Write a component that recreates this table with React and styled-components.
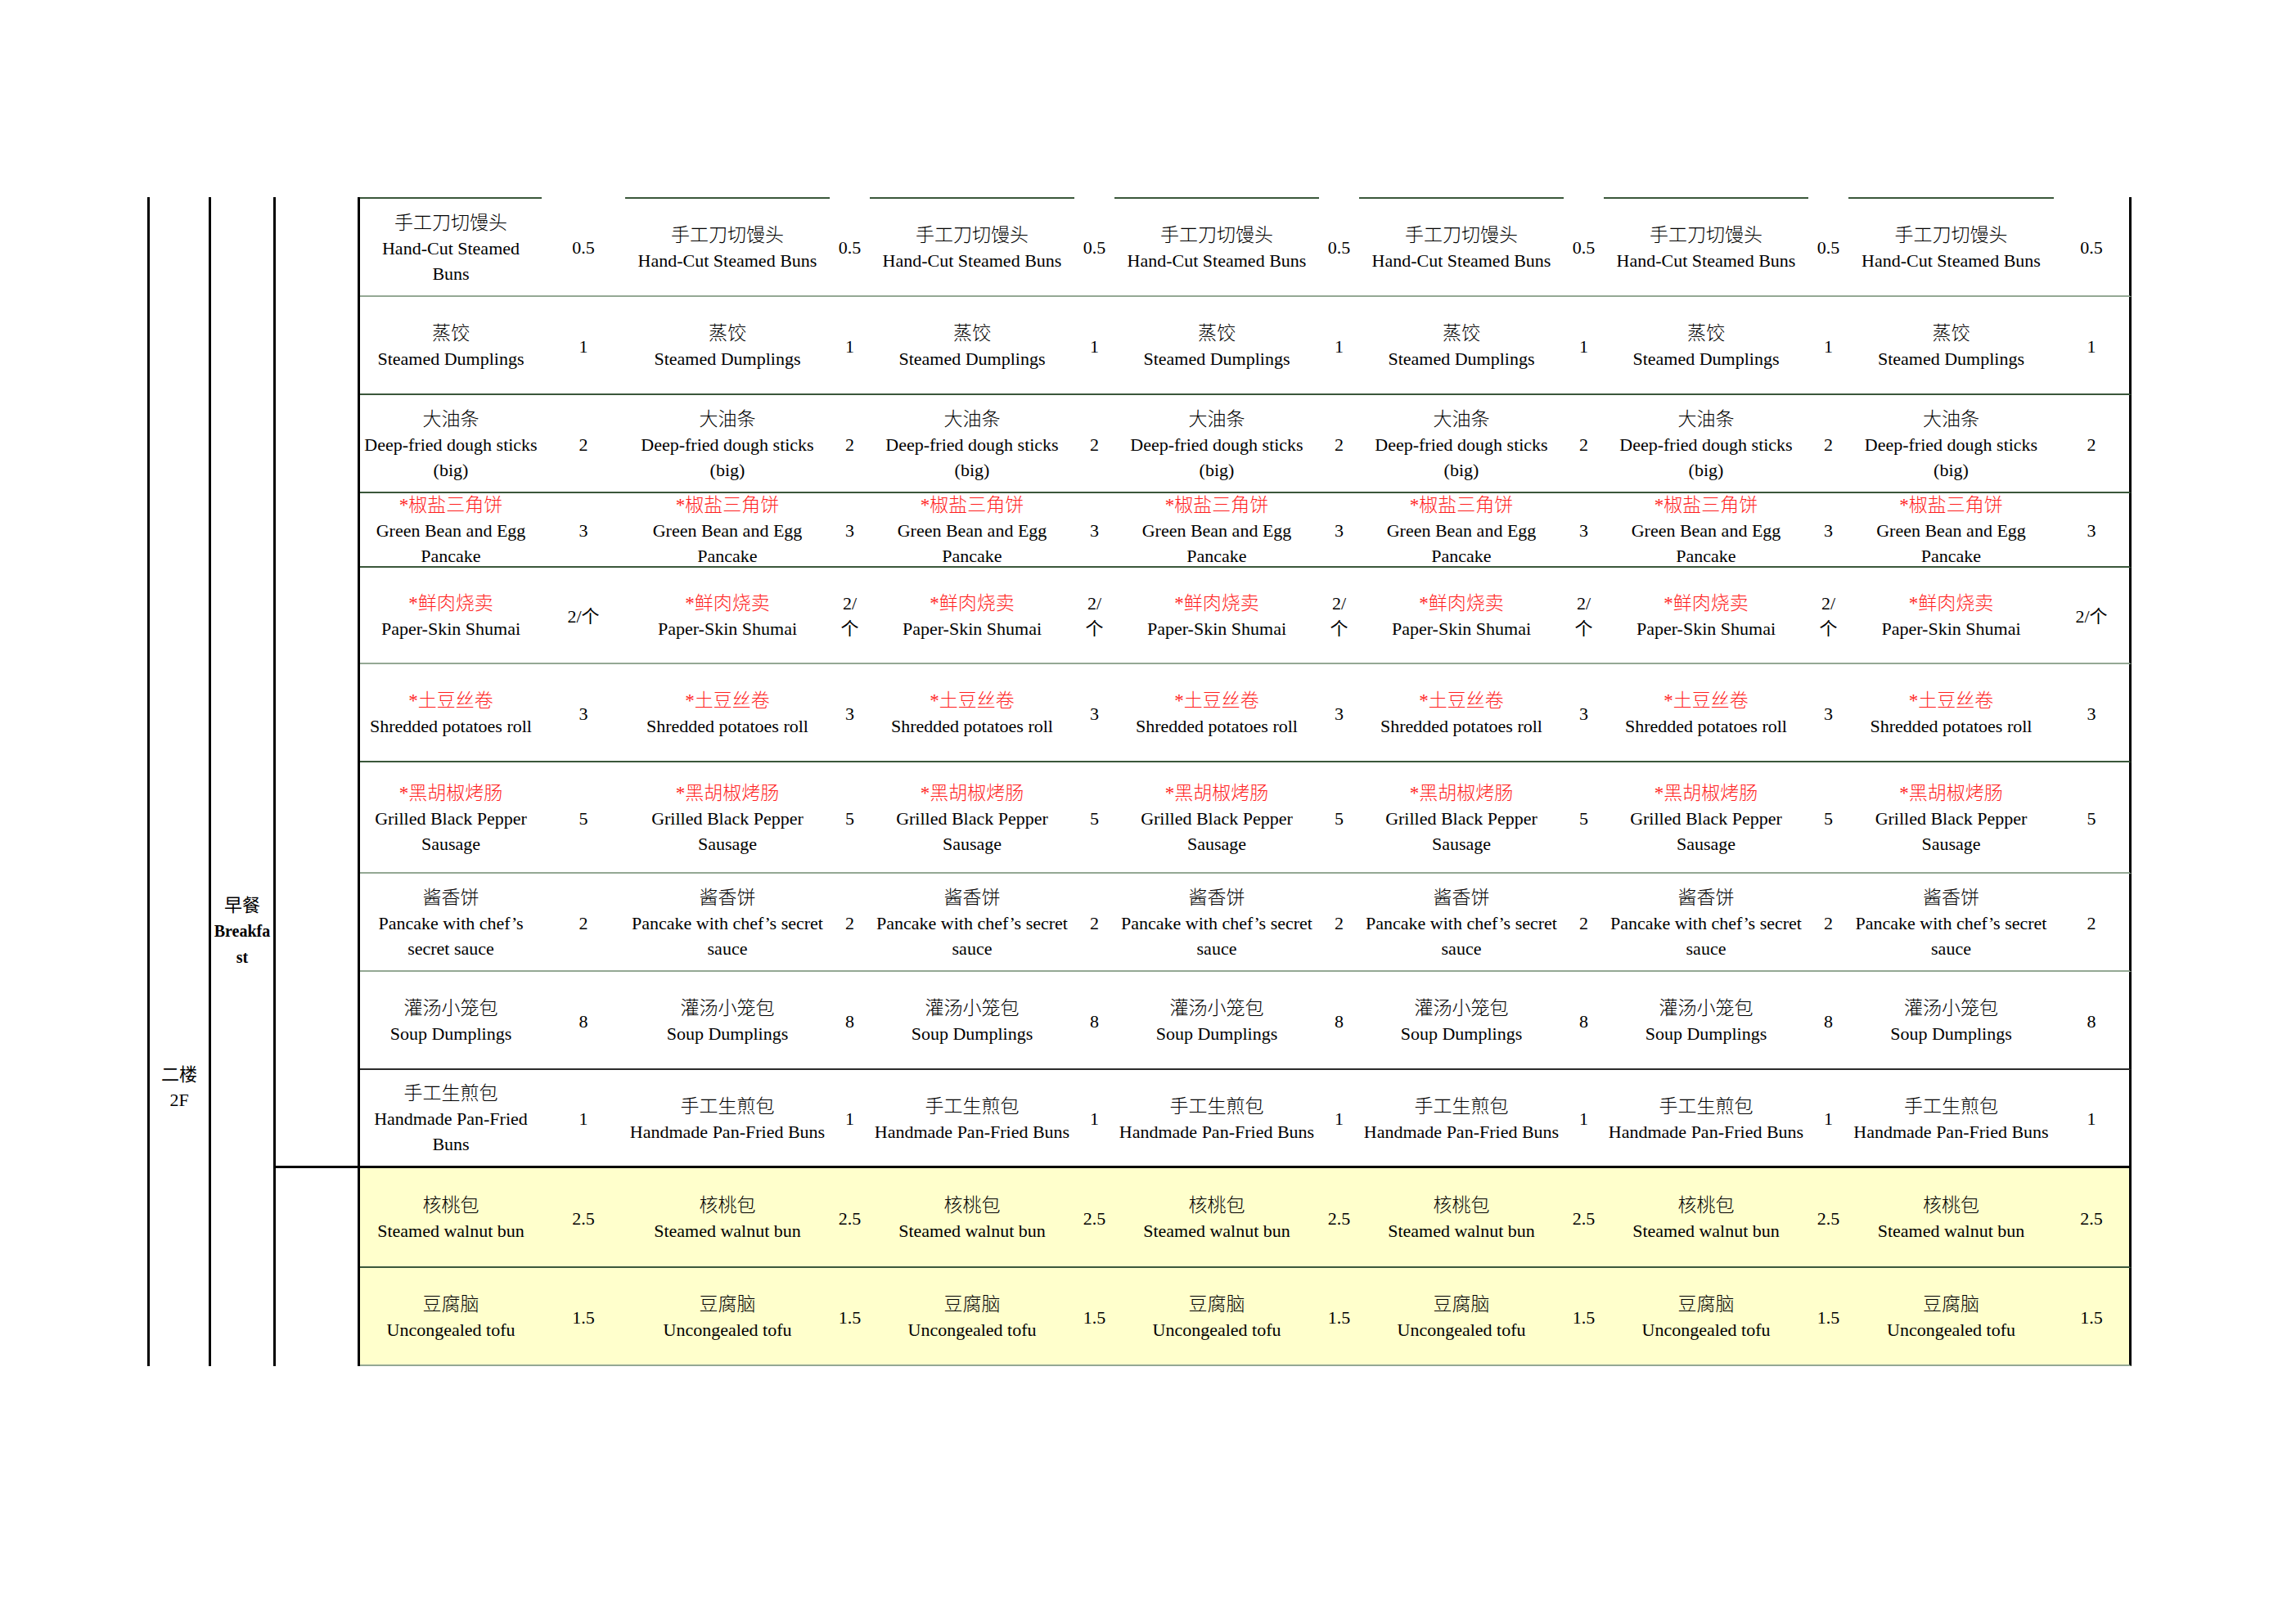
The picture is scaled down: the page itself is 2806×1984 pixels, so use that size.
import React from 'react';
import styled, { createGlobalStyle } from 'styled-components';

const GlobalStyle = createGlobalStyle`
  html, body {
    margin: 0;
    padding: 0;
    background: #fff;
  }
  body {
    font-family: "Liberation Serif", "Noto Sans CJK SC", serif;
    color: #000;
  }
`;

const LINES = {
  dark: '2px solid #3a573a',
  light: '2px solid #94a894',
  gray: '2px solid #2b2b2b',
  black: '3px solid #000',
};

const MENU = [
  { h: 122, line: 'light', zh: '手工刀切馒头', en: ['Hand-Cut Steamed', 'Buns'], wide: ['Hand-Cut Steamed Buns'], price: '0.5' },
  { h: 120, line: 'dark', zh: '蒸饺', en: ['Steamed Dumplings'], price: '1' },
  { h: 120, line: 'dark', zh: '大油条', en: ['Deep-fried dough sticks', '(big)'], price: '2' },
  { h: 91, line: 'dark', zh: '*椒盐三角饼', red: true, en: ['Green Bean and Egg', 'Pancake'], price: '3' },
  { h: 118, line: 'light', zh: '*鲜肉烧卖', red: true, en: ['Paper-Skin Shumai'], price: '2/个' },
  { h: 120, line: 'dark', zh: '*土豆丝卷', red: true, en: ['Shredded potatoes roll'], price: '3' },
  { h: 136, line: 'light', zh: '*黑胡椒烤肠', red: true, en: ['Grilled Black Pepper', 'Sausage'], price: '5' },
  { h: 120, line: 'light', zh: '酱香饼', en: ['Pancake with chef’s', 'secret sauce'], wide: ['Pancake with chef’s secret', 'sauce'], price: '2' },
  { h: 120, line: 'gray', zh: '灌汤小笼包', en: ['Soup Dumplings'], price: '8' },
  { h: 120, line: 'black', zh: '手工生煎包', en: ['Handmade Pan-Fried', 'Buns'], wide: ['Handmade Pan-Fried Buns'], price: '1' },
  { h: 122, line: 'dark', zh: '核桃包', en: ['Steamed walnut bun'], price: '2.5', yellow: true },
  { h: 120, line: 'light', zh: '豆腐脑', en: ['Uncongealed tofu'], price: '1.5', yellow: true },
];

const Page = styled.div`
  width: 2806px;
  min-height: 1984px;
  background: #fff;
  overflow: hidden;
`;

const Sheet = styled.div`
  display: grid;
  width: max-content;
  margin: 241px 0 0 180px;
  grid-template-columns: 78px 79px 103px 222px 102px repeat(5, 250px 49px) 251px 95px;
  grid-template-rows: ${MENU.map(r => r.h + 'px').join(' ')};
  font-size: 22px;
  line-height: 31px;
`;

const SideCol = styled.div`
  box-sizing: border-box;
  grid-column: ${p => p.$col};
  grid-row: ${p => p.$rows};
  border-right: 3px solid #000;
  border-left: ${p => (p.$outer ? '3px solid #000' : 'none')};
  border-bottom: ${p => (p.$cut ? '3px solid #000' : 'none')};
  padding-top: ${p => p.$pad || 0}px;
  display: flex;
  flex-direction: column;
  align-items: center;
  text-align: center;
`;

const FloorText = styled.div`
  font-size: 22px;
  line-height: 31px;
`;

const MealZh = styled.div`
  font-size: 22px;
  line-height: 31px;
`;

const MealEn = styled.div`
  font-size: 20px;
  line-height: 32px;
  font-weight: bold;
  width: 72px;
  word-break: break-all;
`;

const NameCell = styled.div`
  box-sizing: border-box;
  display: flex;
  flex-direction: column;
  align-items: center;
  justify-content: center;
  text-align: center;
  white-space: nowrap;
  padding: 2px 2px 0;
  background: ${p => (p.$yellow ? '#ffffcc' : '#fff')};
  border-top: ${p => (p.$top ? LINES.dark : 'none')};
  border-bottom: ${p => LINES[p.$line]};
`;

const PriceCell = styled.div`
  box-sizing: border-box;
  display: flex;
  align-items: center;
  justify-content: center;
  text-align: center;
  padding: 2px 6px 0;
  background: ${p => (p.$yellow ? '#ffffcc' : '#fff')};
  border-bottom: ${p => LINES[p.$line]};
  border-right: ${p => (p.$last ? '3px solid #000' : 'none')};
`;

const Zh = styled.div`
  color: ${p => (p.$red ? '#ff1f1f' : '#000')};
  font-size: 23px;
  font-weight: 300;
`;

const En = styled.div``;

export default function App() {
  return (
    <Page>
      <GlobalStyle />
      <Sheet>
        <SideCol $col="1" $rows="1 / -1" $outer $pad={1057}>
          <FloorText>二楼</FloorText>
          <FloorText>2F</FloorText>
        </SideCol>
        <SideCol $col="2" $rows="1 / -1" $pad={850}>
          <MealZh>早餐</MealZh>
          <MealEn>Breakfast</MealEn>
        </SideCol>
        <SideCol $col="3" $rows="1 / 11" $cut />
        <SideCol $col="3" $rows="11 / 13" />
        {MENU.map((item, r) =>
          Array.from({ length: 7 }).map((_, c) => {
            const en = c > 0 && item.wide ? item.wide : item.en;
            return (
              <React.Fragment key={`${r}-${c}`}>
                <NameCell $line={item.line} $yellow={item.yellow} $top={r === 0}>
                  <Zh $red={item.red}>{item.zh}</Zh>
                  {en.map(t => (
                    <En key={t}>{t}</En>
                  ))}
                </NameCell>
                <PriceCell $line={item.line} $yellow={item.yellow} $last={c === 6}>
                  {item.price}
                </PriceCell>
              </React.Fragment>
            );
          })
        )}
      </Sheet>
    </Page>
  );
}
